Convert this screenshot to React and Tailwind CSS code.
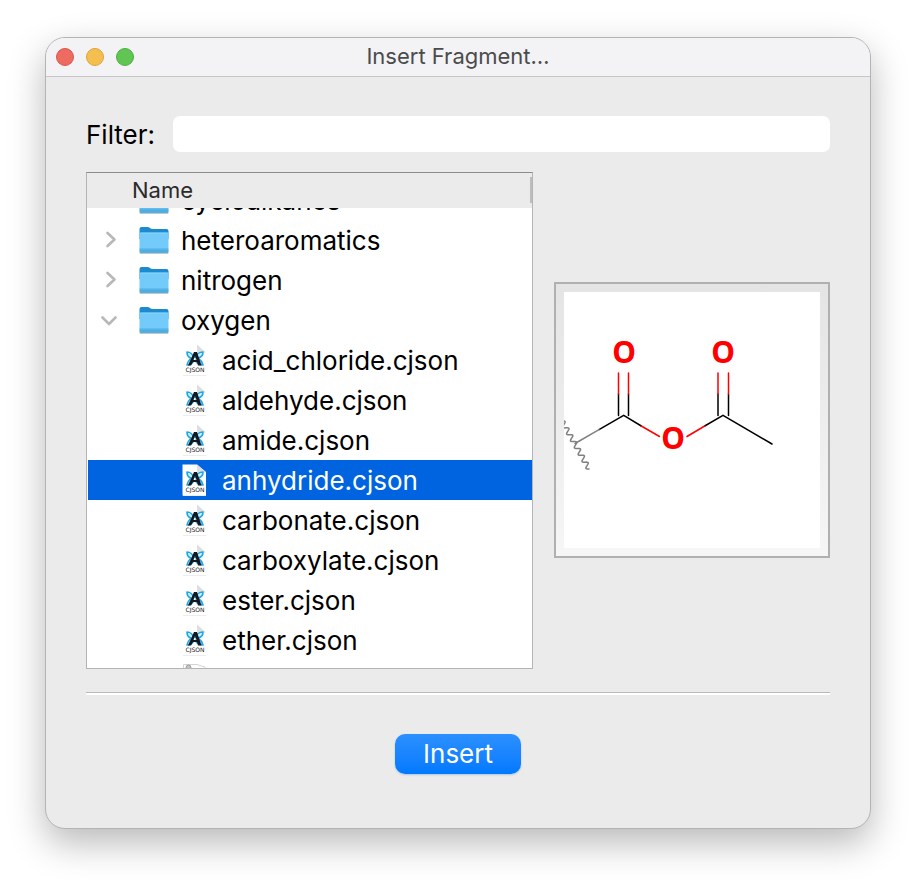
import React, { useState } from "react";

const folders = ["cycloalkanes", "heteroaromatics", "nitrogen"];
const files = [
  "acid_chloride.cjson",
  "aldehyde.cjson",
  "amide.cjson",
  "anhydride.cjson",
  "carbonate.cjson",
  "carboxylate.cjson",
  "ester.cjson",
  "ether.cjson",
];

// Wavy line that marks the attachment point of the fragment.
function wavePath(x1, y1, x2, y2, periods, amplitude) {
  const length = Math.hypot(x2 - x1, y2 - y1);
  const nx = -(y2 - y1) / length;
  const ny = (x2 - x1) / length;
  const steps = 120;
  const points = [];
  for (let i = 0; i <= steps; i += 1) {
    const t = i / steps;
    const s = Math.sin(t * periods * 2 * Math.PI) * amplitude;
    points.push(`${(x1 + (x2 - x1) * t + nx * s).toFixed(2)} ${(y1 + (y2 - y1) * t + ny * s).toFixed(2)}`);
  }
  return `M${points.join("L")}`;
}

function FolderIcon() {
  return (
    <svg className="ml-4 h-8 w-8 shrink-0" viewBox="0 0 32 32" aria-hidden="true">
      <defs>
        <linearGradient id="folder-front" x1="0" y1="0" x2="0" y2="1">
          <stop offset="0" stopColor="#74cbf9" />
          <stop offset="0.78" stopColor="#72cafa" />
          <stop offset="0.84" stopColor="#5dbbee" />
          <stop offset="1" stopColor="#4bacdf" />
        </linearGradient>
      </defs>
      <rect x="2.500" y="27.500" width="29" height="2.500" rx="1" fill="#000" opacity="0.22" />
      <path d="M2.500 5q0-2 2-2h6q1.500 0 2.500 1t2.500 1H29.500q2 0 2 2v8h-29z" fill="#1b8ad0" />
      <path d="M2.500 10q0-1.500 1.500-1.500h26q1.500 0 1.500 1.500v17.500q0 1.500-1.500 1.500h-26q-1.500 0-1.500-1.500z" fill="url(#folder-front)" />
      <path d="M3 9h28" stroke="#9be0ff" strokeWidth="0.600" />
      <path d="M2.500 25h29M2.500 26.800h29" stroke="#3d9fd6" strokeWidth="0.600" />
    </svg>
  );
}

function FileIcon() {
  return (
    <svg className="ml-4 h-8 w-6 shrink-0" viewBox="0 0 24 32" aria-hidden="true">
      <path d="M0.500 0.500h14.500L24 8v23.500H0.500z" fill="#fff" />
      <path d="M15 0.500L24 8.500h-7.500q-1.500 0-1.500-1.500z" fill="#dedede" />
      <path d="M1 31.500h23" stroke="#ededed" />
      <g fill="#c9f1ff" stroke="#1fa5e6" strokeWidth="1.600" strokeLinejoin="round">
        <path d="M12 14Q10 8 5 8q0 5 4 6-3 3-4 7 5 0 7-5" />
        <path d="M13 14Q15 8 21 8q0 5-5 6 4 3 5 7-5 0-8-5" />
      </g>
      <path d="M12 8h3l4.500 13.500h-3.500L15 18h-4l-2 3.500H6z M13 12l-1.500 4h3z" fill="#14181e" fillRule="evenodd" />
      <text x="13" y="28" textAnchor="middle" fontSize="6" fontFamily="DejaVu Sans, sans-serif" fill="#111">CJSON</text>
    </svg>
  );
}

function ImageFileIcon() {
  return (
    <svg className="ml-4 h-8 w-6 shrink-0" viewBox="0 0 24 32" aria-hidden="true">
      <path d="M1.500 30.500V0.500h13.500l8 2.500v27.500z" fill="#fdfdfb" stroke="#d4d4cf" />
      <path d="M4 4q0-3 2.500-3T9 4" fill="#c4c4c4" stroke="#999" />
    </svg>
  );
}

function Chevron({ open }) {
  return (
    <svg className="h-5 w-5" viewBox="0 0 20 20" fill="none" stroke="#b8b8b8" strokeWidth="2.600" strokeLinecap="round" strokeLinejoin="round" aria-hidden="true">
      {open ? <path d="M1.500 7.500l6.500 6.500L14.500 7.500" /> : <path d="M6.500 3l7 6.500-7 6.500" />}
    </svg>
  );
}

function FolderRow({ name, open, children }) {
  return (
    <li role="treeitem" aria-expanded={!!open}>
      <div className="flex h-10 items-center pl-[14px]">
        <button type="button" aria-label={`Toggle ${name}`}>
          <Chevron open={open} />
        </button>
        <FolderIcon />
        <span className="ml-3 pt-0.5 text-[26px] leading-8">{name}</span>
      </div>
      {children}
    </li>
  );
}

function Molecule() {
  return (
    <svg className="h-64 w-64 bg-white" viewBox="0 0 256 256" fill="none" strokeWidth="1.500" strokeLinecap="round" role="img" aria-label="Anhydride structure">
      <g stroke="#000">
        <path d="M35 137.700L59.700 123.300L77.300 134M54.500 102v21.500M64.500 102v21.500" />
        <path d="M140.700 134L159 123.300L208 152M154 102v21.500M164.500 102v21.500" />
      </g>
      <g stroke="#f00">
        <path d="M54.500 81v21M64.500 81v21M154 81v21M164.500 81v21M77.300 134L95.500 144.500M123 144.500L140.700 134" />
      </g>
      <g stroke="#808080">
        <path d="M11 151.500L35 137.700" />
        <path d={wavePath(-2, 129, 25, 177, 7, -2.4)} />
      </g>
      <g fill="#f00" fontFamily="Noto Sans, sans-serif" fontSize="30" fontWeight="700" textAnchor="middle">
        <text x="60" y="71">O</text>
        <text x="159" y="71">O</text>
        <text x="109" y="157">O</text>
      </g>
    </svg>
  );
}

export default function App() {
  const [selected, setSelected] = useState("anhydride.cjson");
  return (
    <div className="min-h-screen bg-white px-[45px] pt-[37px] pb-[53px] font-['Inter',sans-serif] text-black">
      <main className="overflow-hidden rounded-[20px] border border-[#b4b4b4] bg-[#ebebeb] shadow-[0_14px_36px_rgba(0,0,0,0.28)]">
        <header className="grid h-[39px] grid-cols-[1fr_auto_1fr] items-center border-b border-[#c6c6c8] bg-[#f3f3f5] px-[10px]">
          <div className="flex gap-3">
            <button type="button" aria-label="Close" className="h-[18px] w-[18px] rounded-full border border-[#d9574b] bg-[#ed6b60]" />
            <button type="button" aria-label="Minimize" className="h-[18px] w-[18px] rounded-full border border-[#dca33f] bg-[#f5bf4f]" />
            <button type="button" aria-label="Zoom" className="h-[18px] w-[18px] rounded-full border border-[#4fae42] bg-[#61c554]" />
          </div>
          <h1 className="pb-0.5 text-[22px] leading-7 text-[#4b4b4b]">Insert Fragment…</h1>
        </header>

        <div className="px-10 pt-[39px] pb-[54px]">
          <div className="flex h-9 items-center gap-[18px]">
            <label htmlFor="filter" className="pt-0.5 text-[26px] leading-8">Filter:</label>
            <input id="filter" type="text" className="h-9 min-w-0 flex-1 rounded-[7px] bg-white px-2 text-[26px] outline-none" />
          </div>

          <div className="mt-5 flex items-center gap-[21px]">
            <section className="min-w-0 flex-1 border border-[#b4b4b4] border-t-[#8c8c8c]">
              <div className="flex h-[35px] items-center justify-between pl-[45px] text-[22px] leading-7 text-[#2a2a2a]">
                <span className="pb-0.5">Name</span>
                <span className="mb-0.5 h-[26px] w-[2px] bg-[#bdbdbd]" />
              </div>
              <div className="h-[460px] overflow-hidden bg-white">
                <ul role="tree" aria-label="Fragments" className="-mt-7">
                  {folders.map((name) => (
                    <FolderRow key={name} name={name} />
                  ))}
                  <FolderRow name="oxygen" open>
                    <ul role="group">
                      {files.map((name) => (
                        <li key={name} role="treeitem" aria-selected={name === selected} className="pl-px">
                          <button
                            type="button"
                            onClick={() => setSelected(name)}
                            className={`flex h-10 w-full items-center pl-[78px] text-left text-[26px] leading-8 ${name === selected ? "bg-[#0064e1] text-white" : "text-black"}`}
                          >
                            <FileIcon />
                            <span className="ml-4 pt-0.5">{name}</span>
                          </button>
                        </li>
                      ))}
                      <li className="flex h-10 items-center pl-[79px]">
                        <ImageFileIcon />
                      </li>
                    </ul>
                  </FolderRow>
                </ul>
              </div>
            </section>
            <figure className="mb-px shrink-0 border-2 border-[#b0b0b0] bg-linear-to-b from-[#e4e4e4] to-[#f6f6f6] p-2">
              <Molecule />
            </figure>
          </div>

          <hr className="mt-[23px] h-[3px] border-t border-[#b9b9b9] bg-white" />

          <div className="mt-[39px] flex justify-center">
            <button type="button" className="h-10 w-[126px] rounded-[10px] bg-linear-to-b from-[#2b90ff] to-[#0079ff] text-[26px] leading-8 text-white shadow-[0_1px_2px_rgba(0,90,200,0.25)]">
              Insert
            </button>
          </div>
        </div>
      </main>
    </div>
  );
}
